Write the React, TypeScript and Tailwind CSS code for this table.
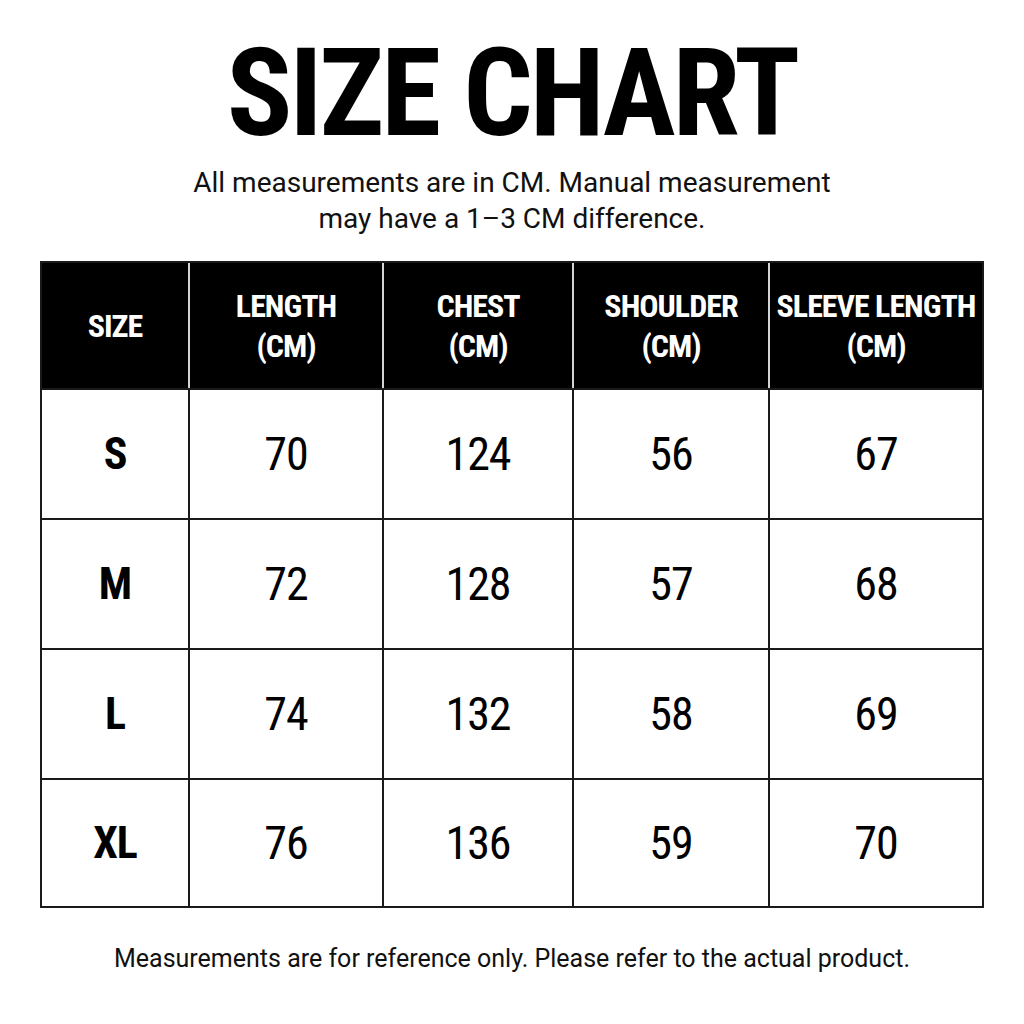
const headers = [
  ["SIZE"],
  ["LENGTH", "(CM)"],
  ["CHEST", "(CM)"],
  ["SHOULDER", "(CM)"],
  ["SLEEVE LENGTH", "(CM)"],
];

const rows = [
  { size: "S", values: [70, 124, 56, 67], h: "h-[130px]" },
  { size: "M", values: [72, 128, 57, 68], h: "h-[130px]" },
  { size: "L", values: [74, 132, 58, 69], h: "h-[130px]" },
  { size: "XL", values: [76, 136, 59, 70], h: "h-[128px]" },
];

export default function App() {
  return (
    <main className="min-h-screen w-full bg-white flex flex-col items-center pt-[33px] text-black">
      {/* Title */}
      <h1 className="font-['Roboto_Condensed',Roboto,sans-serif] font-stretch-condensed font-bold text-[122px] leading-none tracking-[-3px]">
        SIZE CHART
      </h1>
      <p className="mt-[10px] text-center font-['Roboto',sans-serif] text-[28px] leading-[36px] text-[#111]">
        All measurements are in CM. Manual measurement
        <br />
        may have a 1–3 CM difference.
      </p>

      {/* Table */}
      <div className="mt-[24px] w-[944px] border-2 border-[#1a1a1a] font-['Roboto_Condensed',Roboto,sans-serif] font-stretch-condensed">
        <div className="grid grid-cols-[146px_194px_190px_196px_214px] h-[125px] bg-black text-white">
          {headers.map((lines, i) => (
            <div
              key={i}
              className={`flex flex-col items-center justify-center whitespace-nowrap text-[32px] leading-[40px] font-bold tracking-[-1px] ${
                i > 0 ? "border-l-2 border-[#d4d4d4]" : ""
              }`}
            >
              {lines.map((l) => (
                <span key={l}>{l}</span>
              ))}
            </div>
          ))}
        </div>
        {rows.map((r) => (
          <div key={r.size} className={`grid grid-cols-[146px_194px_190px_196px_214px] border-t-2 border-[#1a1a1a] ${r.h}`}>
            <div className="flex items-center justify-center text-[44px] font-bold tracking-[-1px]">{r.size}</div>
            {r.values.map((v, j) => (
              <div key={j} className="flex items-center justify-center border-l-2 border-[#1a1a1a] text-[46px] font-normal tracking-[-1px]">
                {v}
              </div>
            ))}
          </div>
        ))}
      </div>

      <p className="mt-[36px] font-['Roboto',sans-serif] text-[25px] leading-[30px] text-[#111]">
        Measurements are for reference only. Please refer to the actual product.
      </p>
    </main>
  );
}
